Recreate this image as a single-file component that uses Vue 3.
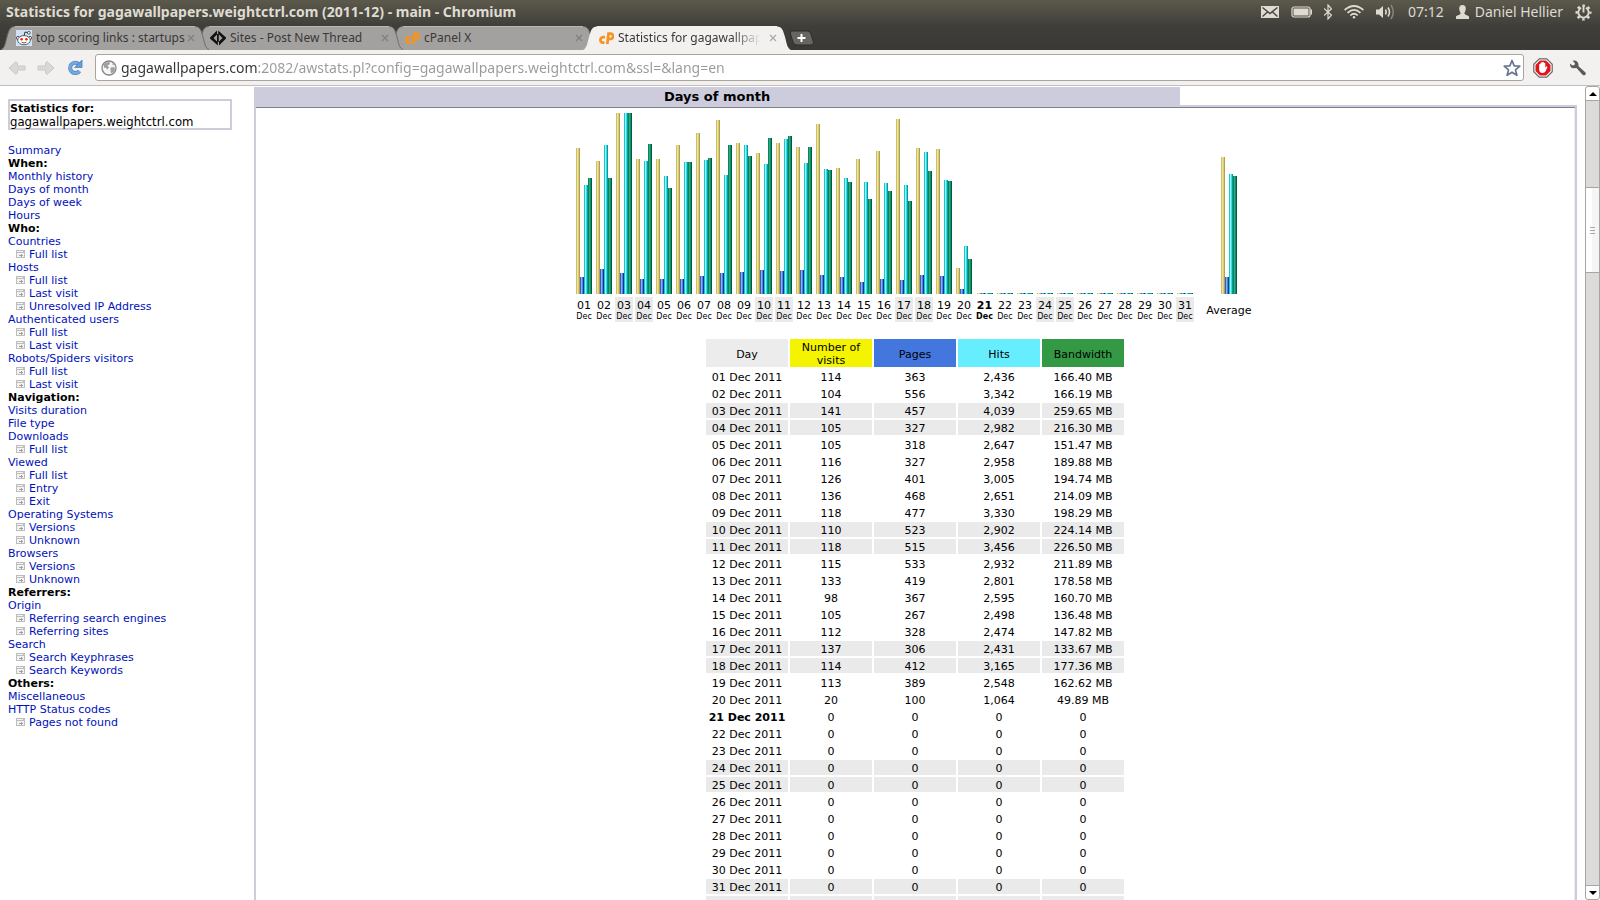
<script setup>
import { ref } from 'vue'

const url = ref('gagawallpapers.com:2082/awstats.pl?config=gagawallpapers.weightctrl.com&ssl=&lang=en')

const tabs = [
  { title: 'top scoring links : startups', icon: 'reddit', active: false },
  { title: 'Sites - Post New Thread', icon: 'code', active: false },
  { title: 'cPanel X', icon: 'cp', active: false },
  { title: 'Statistics for gagawallpapers', icon: 'cp', active: true }
]

// kind: h = heading, l = link, s = sub link
const menu = [
  ['l', 'Summary'], ['h', 'When:'], ['l', 'Monthly history'], ['l', 'Days of month'], ['l', 'Days of week'], ['l', 'Hours'],
  ['h', 'Who:'], ['l', 'Countries'], ['s', 'Full list'], ['l', 'Hosts'], ['s', 'Full list'], ['s', 'Last visit'],
  ['s', 'Unresolved IP Address'], ['l', 'Authenticated users'], ['s', 'Full list'], ['s', 'Last visit'],
  ['l', 'Robots/Spiders visitors'], ['s', 'Full list'], ['s', 'Last visit'],
  ['h', 'Navigation:'], ['l', 'Visits duration'], ['l', 'File type'], ['l', 'Downloads'], ['s', 'Full list'],
  ['l', 'Viewed'], ['s', 'Full list'], ['s', 'Entry'], ['s', 'Exit'],
  ['l', 'Operating Systems'], ['s', 'Versions'], ['s', 'Unknown'], ['l', 'Browsers'], ['s', 'Versions'], ['s', 'Unknown'],
  ['h', 'Referrers:'], ['l', 'Origin'], ['s', 'Referring search engines'], ['s', 'Referring sites'],
  ['l', 'Search'], ['s', 'Search Keyphrases'], ['s', 'Search Keywords'],
  ['h', 'Others:'], ['l', 'Miscellaneous'], ['l', 'HTTP Status codes'], ['s', 'Pages not found']
]

const stats = [
  [114, 363, 2436, 166.40], [104, 556, 3342, 166.19], [141, 457, 4039, 259.65], [105, 327, 2982, 216.30],
  [105, 318, 2647, 151.47], [116, 327, 2958, 189.88], [126, 401, 3005, 194.74], [136, 468, 2651, 214.09],
  [118, 477, 3330, 198.29], [110, 523, 2902, 224.14], [118, 515, 3456, 226.50], [115, 533, 2932, 211.89],
  [133, 419, 2801, 178.58], [98, 367, 2595, 160.70], [105, 267, 2498, 136.48], [112, 328, 2474, 147.82],
  [137, 306, 2431, 133.67], [114, 412, 3165, 177.36], [113, 389, 2548, 162.62], [20, 100, 1064, 49.89]
]
const weekend = [3, 4, 10, 11, 17, 18, 24, 25, 31]
const average = [107, 378, 2680, 169.50]
const tops = [141, 4039, 4039, 259.65]
const kinds = ['visits', 'pages', 'hits', 'bandwidth']

const bars = (values) =>
  values.map((v, i) => ({ kind: kinds[i], height: Math.floor((v / tops[i]) * 180) + 1 + 'px' }))

const cells = (v) => [v[0], v[1], v[2].toLocaleString('en-US'), v[3] ? v[3].toFixed(2) + ' MB' : '0']

const days = Array.from({ length: 31 }, (_, i) => {
  const values = stats[i] || [0, 0, 0, 0]
  return {
    num: String(i + 1).padStart(2, '0'),
    weekend: weekend.includes(i + 1),
    today: i + 1 === 21,
    bars: bars(values),
    cells: cells(values)
  }
})
</script>

<template>
  <div class="desktop">
    <header class="titlebar">
      <div class="window-title">Statistics for gagawallpapers.weightctrl.com (2011-12) - main - Chromium</div>
      <div class="indicators">
        <button class="ind" aria-label="Messages">
          <svg width="18" height="12" viewBox="0 0 18 12"><rect width="18" height="12" fill="#dfdbd2" /><path d="M1.500 1.500L9 7.500L16.500 1.500M1.500 10.500L6.500 6M16.500 10.500L11.500 6" fill="none" stroke="#45443e" stroke-width="1.400" /></svg>
        </button>
        <button class="ind" aria-label="Battery">
          <svg width="21" height="12" viewBox="0 0 21 12"><rect x="1" y="1" width="18" height="10" rx="2" fill="none" stroke="#dfdbd2" stroke-width="1.200" /><rect x="2.500" y="2.500" width="15" height="7" fill="#dfdbd2" /><rect x="19.500" y="3.500" width="1.500" height="5" fill="#dfdbd2" /></svg>
        </button>
        <button class="ind" aria-label="Bluetooth">
          <svg width="8" height="16" viewBox="0 0 8 16"><path d="M0 4.500L7.500 11.200L4 15V1L7.500 4.800L0 11.500" fill="none" stroke="#dfdbd2" stroke-width="1.200" /></svg>
        </button>
        <button class="ind" aria-label="Network">
          <svg width="20" height="14" viewBox="0 0 20 14" fill="none" stroke="#dfdbd2" stroke-width="1.700"><path d="M.6 5Q10-3 19.400 5M3.500 7.800Q10 2 16.500 7.800M6.300 10.500Q10 7 13.700 10.500" /><circle cx="10" cy="12.300" r="1.200" fill="#dfdbd2" stroke="none" /></svg>
        </button>
        <button class="ind" aria-label="Volume">
          <svg width="20" height="16" viewBox="0 0 20 16" fill="none"><path d="M0 5.500H3L7 2V14L3 10.500H0Z" fill="#dfdbd2" /><path d="M9.500 5.500Q11 8 9.500 10.500M12 3.500Q15 8 12 12.500" stroke="#dfdbd2" stroke-width="1.600" /><path d="M15 1Q19.500 8 15 15" stroke="#88857c" stroke-width="1.500" /></svg>
        </button>
        <button class="ind">07:12</button>
        <button class="ind user">
          <svg width="13" height="14" viewBox="0 0 13 14"><path d="M6.500 0C9 0 10 1.800 9.800 4C9.600 6 8.700 7 8.400 8C8.400 10 12 10.200 13 11.500V14H0V11.500C1 10.200 4.600 10 4.600 8C4.300 7 3.400 6 3.200 4C3 1.800 4 0 6.500 0Z" fill="#dfdbd2" /></svg>
          Daniel Hellier
        </button>
        <button class="ind" aria-label="Session">
          <svg width="17" height="17" viewBox="0 0 18 18" fill="none" stroke="#dfdbd2"><circle cx="9" cy="9" r="7.300" stroke-width="2.400" stroke-dasharray="2.700 3.034" stroke-dashoffset="1.350" /><path d="M6.500 4A5.500 5.500 0 1 0 11.500 4" stroke-width="2" /><path d="M9 2V9" stroke-width="2" /></svg>
        </button>
      </div>
    </header>

    <nav class="tabstrip" aria-label="Tabs">
      <div v-for="(t, i) in tabs" :key="i" class="tab" :class="{ active: t.active, ['order' + i]: true }">
        <svg class="edge" width="14" height="24" viewBox="0 0 14 24"><path class="fill" d="M0 24C4 22 4 18 6 11S9 .5 14 .5V24Z" /><path class="line" d="M0 23.500C4 22 4 18 6 11S9 .5 14 .5" /></svg>
        <button class="tab-body">
          <svg v-if="t.icon === 'reddit'" class="favicon" width="16" height="16" viewBox="0 0 16 16"><rect width="16" height="16" fill="#cee3f8" /><path d="M8 6L9 2L12.500 2.800" fill="none" stroke="#333" /><g fill="#fff" stroke="#333" stroke-width=".8"><circle cx="12.800" cy="2.800" r="1.400" /><circle cx="2" cy="8" r="1.600" /><circle cx="14" cy="8" r="1.600" /><ellipse cx="8" cy="10.200" rx="6.300" ry="4.600" /></g><circle cx="5.600" cy="9.200" r="1.300" fill="#f02010" /><circle cx="10.400" cy="9.200" r="1.300" fill="#f02010" /><path d="M5.500 12.200Q8 13.800 10.500 12.200" fill="none" stroke="#333" stroke-width=".8" /></svg>
          <svg v-else-if="t.icon === 'code'" class="favicon" width="16" height="16" viewBox="0 0 16 16" fill="#111"><path d="M7 .5V4.500L3.500 8L7 11.500H7.800V15.500L0 8.600V7.400ZM9 15.500V11.500L12.500 8L9 4.500H8.200V.5L16 7.400V8.600Z" /><path d="M7 4H8.800V12H7Z" /></svg>
          <svg v-else class="favicon" width="16" height="16" viewBox="0 0 16 16" fill="none" stroke="#f7931e" stroke-width="2.700"><path d="M7 7.200H4.500A2.800 2.800 0 0 0 4.500 12.600H6.500" /><path d="M9.300 14.200L10.500 3.600H12.500A2.500 2.500 0 0 1 12.300 9H10.200" /></svg>
          <span class="tab-title">{{ t.title }}</span>
        </button>
        <button class="close" aria-label="Close tab">
          <svg width="8" height="8" viewBox="0 0 8 8"><path d="M1 1L7 7M7 1L1 7" stroke="currentColor" stroke-width="1.300" /></svg>
        </button>
        <svg class="edge" width="14" height="24" viewBox="0 0 14 24"><path class="fill" d="M14 24C10 22 10 18 8 11S5 .5 0 .5V24Z" /><path class="line" d="M14 23.500C10 22 10 18 8 11S5 .5 0 .5" /></svg>
      </div>
      <button class="newtab" aria-label="New tab">
        <svg width="26" height="16" viewBox="0 0 26 16"><path d="M3 1H18Q21 1 22 4L24.500 12Q25 15 22 15H8Q5 15 4 12L1.500 4Q1 1 3 1Z" fill="#66655f" stroke="#2e2d2a" /><path d="M12.500 4V12M8.500 8H16.500" stroke="#fff" stroke-width="2" /></svg>
      </button>
    </nav>

    <div class="toolbar">
      <div class="nav-buttons">
        <button aria-label="Back">
          <svg width="18" height="16" viewBox="0 0 18 16"><path d="M8 1.500L1 8L8 14.500L9.500 13V10H17V6H9.500V3Z" fill="#dad8d5" stroke="#cbc9c6" /></svg>
        </button>
        <button aria-label="Forward">
          <svg width="18" height="16" viewBox="0 0 18 16"><path d="M10 1.500L17 8L10 14.500L8.500 13V10H1V6H8.500V3Z" fill="#dad8d5" stroke="#cbc9c6" /></svg>
        </button>
        <button aria-label="Reload">
          <svg width="18" height="18" viewBox="0 0 18 18"><path d="M13 5.200A5.200 5.200 0 1 0 13.500 12" fill="none" stroke="#5089c8" stroke-width="4" /><path d="M13 5.200A5.200 5.200 0 1 0 13.500 12" fill="none" stroke="#76aadf" stroke-width="2.400" /><path d="M16 1V8.500H8.500Z" fill="#669dd6" stroke="#4c82bf" stroke-width=".8" /></svg>
        </button>
      </div>
      <div class="omnibox">
        <svg width="16" height="16" viewBox="0 0 16 16"><circle cx="8" cy="8" r="7" fill="#f6f6f6" stroke="#858585" stroke-width="1.300" /><path d="M2.500 4.500Q5 1.500 8.500 2L9 4L6.500 5.500L8 7.500L6.500 9.500L5 8L3 7.500ZM9.500 7.500L13.500 7Q14.500 9.500 12.500 12L10 13.500L9.500 10.500ZM11 3L13 4.500L12 5.500Z" fill="#a0a0a0" /></svg>
        <input v-model="url" class="address" aria-label="Address" type="text" spellcheck="false" />
        <button aria-label="Bookmark this page">
          <svg width="18" height="18" viewBox="0 0 18 18"><path d="M9 1.500L11.200 6.800L16.800 7.200L12.500 10.900L13.900 16.300L9 13.300L4.100 16.300L5.500 10.900L1.200 7.200L6.800 6.800Z" fill="#fff" stroke="#66758f" stroke-width="1.700" stroke-linejoin="round" /></svg>
        </button>
      </div>
      <button aria-label="AdBlock">
        <svg width="20" height="20" viewBox="0 0 20 20"><path d="M6.300 .8H13.700L19.200 6.300V13.700L13.700 19.200H6.300L.8 13.700V6.300Z" fill="#fff" stroke="#666" stroke-width="1.200" /><path d="M7 2.500H13L17.500 7V13L13 17.500H7L2.500 13V7Z" fill="#e0141a" /><path d="M6.200 9V6.200Q7 5.200 7.600 6.200V4.800Q8.400 3.800 9.200 4.800V4.300Q10 3.400 10.800 4.300V5Q11.600 4.200 12.300 5.200V9.500L13.700 8.300Q14.800 8.500 14.200 9.500L12.600 13.200Q11.800 15 9.500 15Q6.500 15 6.200 12Z" fill="#fff" /></svg>
      </button>
      <button class="wrench" aria-label="Settings">
        <svg width="18" height="18" viewBox="0 0 18 18"><path d="M3.500 1.800L6 4.200L5.500 6L3.500 6.500L1 4.500Q.8 8.500 4 9.300L7.500 9L13.500 15.700Q15 17 16.400 15.700Q17.500 14.200 16 13L9.500 7.300Q9.800 4.500 8.500 3Q6.500 1 3.500 1.800Z" fill="#5c5a58" /></svg>
      </button>
    </div>

    <div class="viewport">
      <aside class="sidebar">
        <div class="site-box"><b>Statistics for:</b><span class="domain">gagawallpapers.weightctrl.com</span></div>
        <ul class="menu">
          <li v-for="([kind, label], i) in menu" :key="i">
            <b v-if="kind === 'h'">{{ label }}</b>
            <a v-else-if="kind === 'l'" href="#">{{ label }}</a>
            <template v-else>
              <svg class="sub-icon" width="9" height="9" viewBox="0 0 9 9" shape-rendering="crispEdges"><path d="M0 0H9V8H0Z" fill="#bdbdbd" /><path d="M1 1H7V2H1ZM1 3H8V7H1Z" fill="#f3f3f3" /><path d="M3 5H5V4H6V5H7V6H6V7H5V6H3Z" fill="#a0a0a0" /></svg>
              <a href="#">{{ label }}</a>
            </template>
          </li>
        </ul>
      </aside>

      <main class="report">
        <h1 class="report-title">Days of month</h1>
        <section class="frame">
          <table class="chart" aria-label="Days of month chart">
            <tbody>
              <tr class="bar-row">
                <td v-for="d in days" :key="d.num">
                  <div class="bars"><span v-for="b in d.bars" :key="b.kind" :class="['bar', b.kind]" :style="{ height: b.height }"></span></div>
                </td>
                <td class="spacer"></td>
                <td>
                  <div class="bars average"><span v-for="b in bars(average)" :key="b.kind" :class="['bar', b.kind]" :style="{ height: b.height }"></span></div>
                </td>
              </tr>
              <tr class="label-row">
                <td v-for="d in days" :key="d.num" :class="{ weekend: d.weekend, today: d.today }">{{ d.num }}<span class="month">Dec</span></td>
                <td class="spacer"></td>
                <td>Average</td>
              </tr>
            </tbody>
          </table>

          <table class="data">
            <thead>
              <tr>
                <th class="h-day">Day</th>
                <th class="h-visits">Number of visits</th>
                <th class="h-pages">Pages</th>
                <th class="h-hits">Hits</th>
                <th class="h-bandwidth">Bandwidth</th>
              </tr>
            </thead>
            <tbody>
              <tr v-for="d in days" :key="d.num" :class="{ weekend: d.weekend }">
                <td :class="{ today: d.today }">{{ d.num }} Dec 2011</td>
                <td v-for="(c, i) in d.cells" :key="i">{{ c }}</td>
              </tr>
              <tr class="weekend footer-row">
                <td v-for="n in 5" :key="n"></td>
              </tr>
            </tbody>
          </table>
        </section>
      </main>

      <div class="scrollbar" aria-hidden="true">
        <div class="arrow"><svg width="8" height="4" viewBox="0 0 8 4"><path d="M4 0L8 4H0Z" /></svg></div>
        <div class="before"></div>
        <div class="thumb"><i></i><i></i><i></i></div>
        <div class="after"></div>
        <div class="arrow down"><svg width="8" height="4" viewBox="0 0 8 4"><path d="M0 0H8L4 4Z" /></svg></div>
      </div>
    </div>
  </div>
</template>

<style>
body {
  margin: 0;
  overflow: hidden;
}
</style>

<style scoped>
.desktop {
  display: flex;
  flex-direction: column;
  height: 100vh;
  font-family: "DejaVu Sans", Verdana, sans-serif;
  font-size: 11px;
  line-height: 13px;
  color: #000;
  background: #fff;
}
button {
  display: flex;
  align-items: center;
  padding: 0;
  border: 0;
  background: none;
  color: inherit;
  font: inherit;
}
svg {
  display: block;
  flex: none;
}

/* title bar */
.titlebar {
  display: flex;
  justify-content: space-between;
  align-items: center;
  height: 26px;
  padding: 0 8px 2px 6px;
  box-sizing: border-box;
  background: linear-gradient(#5c594c, #3f3e39);
  color: #dfdbd2;
  font-family: "Noto Sans", sans-serif;
  font-size: 14px;
  line-height: 20px;
}
.window-title {
  font-weight: 700;
}
.indicators {
  display: flex;
  align-items: center;
  gap: 12px;
}
.user {
  gap: 6px;
}

/* tabs */
.tabstrip {
  display: flex;
  align-items: flex-end;
  height: 24px;
  padding-left: 1px;
  background: linear-gradient(#3f3e39, #3a3935);
}
.tab {
  display: flex;
  position: relative;
  width: 208px;
  height: 24px;
  margin-right: -14px;
  color: #3a3835;
  font-family: "Noto Sans", sans-serif;
  font-size: 12px;
  line-height: 18px;
}
.order0 { z-index: 3; }
.order1 { z-index: 2; }
.order2 { z-index: 1; }
.order3 { z-index: 4; }
.edge .fill {
  fill: #a3a19f;
}
.edge .line {
  fill: none;
  stroke: #6d6b68;
}
.tab-body {
  flex: 1;
  min-width: 0;
  gap: 4px;
  background: #a3a19f;
  box-shadow: inset 0 1px #b9b7b4;
}
.favicon {
  margin-left: 1px;
}
.tab-title {
  flex: 1;
  overflow: hidden;
  white-space: nowrap;
  text-align: left;
}
.active .tab-title {
  mask-image: linear-gradient(90deg, #000 80%, transparent);
}
.close {
  padding-left: 2px;
  background: #a3a19f;
  box-shadow: inset 0 1px #b9b7b4;
  color: #82807d;
}
.active .fill {
  fill: #f2f1f0;
}
.active .line {
  stroke: none;
}
.active .tab-body,
.active .close {
  background: #f2f1f0;
  box-shadow: none;
}
.active .close {
  padding-left: 8px;
  color: #aaa;
}
.newtab {
  margin-left: 12px;
  margin-bottom: 4px;
}

/* toolbar */
.toolbar {
  display: flex;
  align-items: center;
  gap: 9px;
  height: 36px;
  padding: 0 13px 0 8px;
  box-sizing: border-box;
  background: #f2f1f0;
  border-bottom: 1px solid #c0bfbd;
}
.nav-buttons {
  display: flex;
  align-items: center;
  gap: 11px;
  margin-right: 2px;
}
.omnibox {
  display: flex;
  flex: 1;
  align-items: center;
  height: 27px;
  padding: 0 2px 0 5px;
  box-sizing: border-box;
  border: 1px solid #aaa49d;
  border-radius: 3px;
  background: #fff;
}
.address {
  flex: 1;
  min-width: 0;
  margin-left: 4px;
  padding: 0;
  border: 0;
  outline: 0;
  font-family: "Noto Sans", sans-serif;
  font-size: 14px;
  line-height: 20px;
  color: transparent;
  background: linear-gradient(90deg, #333 136px, #999 136px);
  background-clip: text;
}
.wrench {
  margin-left: 7px;
}

/* page */
.viewport {
  display: flex;
  flex: 1;
  min-height: 0;
  overflow: hidden;
}
.sidebar {
  flex: 0 0 254px;
  padding: 13px 22px 0 8px;
  box-sizing: border-box;
}
.site-box {
  display: flex;
  flex-direction: column;
  height: 31px;
  padding-top: 1px;
  box-sizing: border-box;
  border: 2px solid #ccccdd;
}
.domain {
  font-family: "DejaVu Sans Condensed", "DejaVu Sans", sans-serif;
  font-size: 13px;
}
.menu {
  margin: 14px 0 0;
  padding: 0;
  list-style: none;
}
.menu li {
  display: flex;
  align-items: center;
  height: 13px;
  white-space: nowrap;
}
.menu a {
  color: #0011bb;
  text-decoration: none;
}
.sub-icon {
  margin: 0 4px 0 8px;
}
.report {
  display: flex;
  flex: 1;
  flex-direction: column;
  min-width: 0;
  margin-top: 1px;
}
.report-title {
  width: 70%;
  height: 18px;
  margin: 0;
  background: #ccccdd;
  font-size: 13px;
  line-height: 19px;
  text-align: center;
}
.frame {
  display: flex;
  flex: 1;
  flex-direction: column;
  align-items: center;
  gap: 13px;
  min-height: 0;
  padding: 4px 1px 0 0;
  overflow: hidden;
  border: 2px solid #ccccdd;
  border-bottom: 0;
  box-shadow: inset 0 1px #808088, inset -1px 0 #eeeef2;
}
table {
  border-spacing: 2px;
  text-align: center;
}
td,
th {
  padding: 2px 1px 0;
  font-weight: 400;
}
.bar-row td {
  padding: 0 1px 1px;
  vertical-align: bottom;
}
.bars {
  display: flex;
  align-items: flex-end;
  justify-content: center;
  min-width: 16px;
}
.bars.average {
  min-width: 50px;
}
.bar {
  width: 4px;
}
.visits {
  background: linear-gradient(90deg, #d0c060 1px, #ece29c 1px 2px, #d8cc80 2px 3px, #b0a050 3px);
}
.pages {
  background: linear-gradient(90deg, #2c5fcb 1px, #8cb0f4 1px 2px, #5080dc 2px 3px, #0a3a98 3px);
}
.hits {
  background: linear-gradient(90deg, #20c4cc 1px, #90f8fc 1px 2px, #40d8e0 2px 3px, #009ca4 3px);
}
.bandwidth {
  background: linear-gradient(90deg, #008858 1px, #30a888 1px 2px, #109068 2px 3px, #005c40 3px);
}
.chart .spacer {
  width: 5px;
  padding: 0;
}
.month {
  display: block;
  font-size: 8px;
  line-height: 10px;
}
.today {
  font-weight: 700;
}
.weekend,
.weekend td {
  background: #eaeaea;
}
tr.weekend {
  background: none;
}
.footer-row td {
  height: 13px;
}
.data {
  table-layout: fixed;
  width: 422px;
}
.h-day { background: #ececec; }
.h-visits { background: #f4f400; }
.h-pages { background: #4477dd; }
.h-hits { background: #66eeff; }
.h-bandwidth { background: #339944; }

/* scroll bar */
.scrollbar {
  display: flex;
  flex: 0 0 15px;
  flex-direction: column;
  margin-left: 8px;
  box-sizing: border-box;
  border: 1px solid #a8a6a4;
  border-radius: 3px;
  background: #dcdbda;
}
.arrow {
  display: flex;
  align-items: center;
  justify-content: center;
  height: 13px;
  border-bottom: 1px solid #a8a6a4;
  border-radius: 3px 3px 0 0;
  background: #fff;
}
.arrow.down {
  border-top: 1px solid #a8a6a4;
  border-bottom: 0;
  border-radius: 0 0 3px 3px;
}
.before {
  flex: 86;
}
.thumb {
  display: flex;
  flex: 84;
  flex-direction: column;
  align-items: center;
  justify-content: center;
  gap: 2px;
  border: solid #a8a6a4;
  border-width: 1px 0;
  background: linear-gradient(90deg, #fff 50%, #f5f5f5 50%);
}
.thumb i {
  width: 5px;
  height: 1px;
  background: #aaa;
}
.after {
  flex: 612;
}
</style>
